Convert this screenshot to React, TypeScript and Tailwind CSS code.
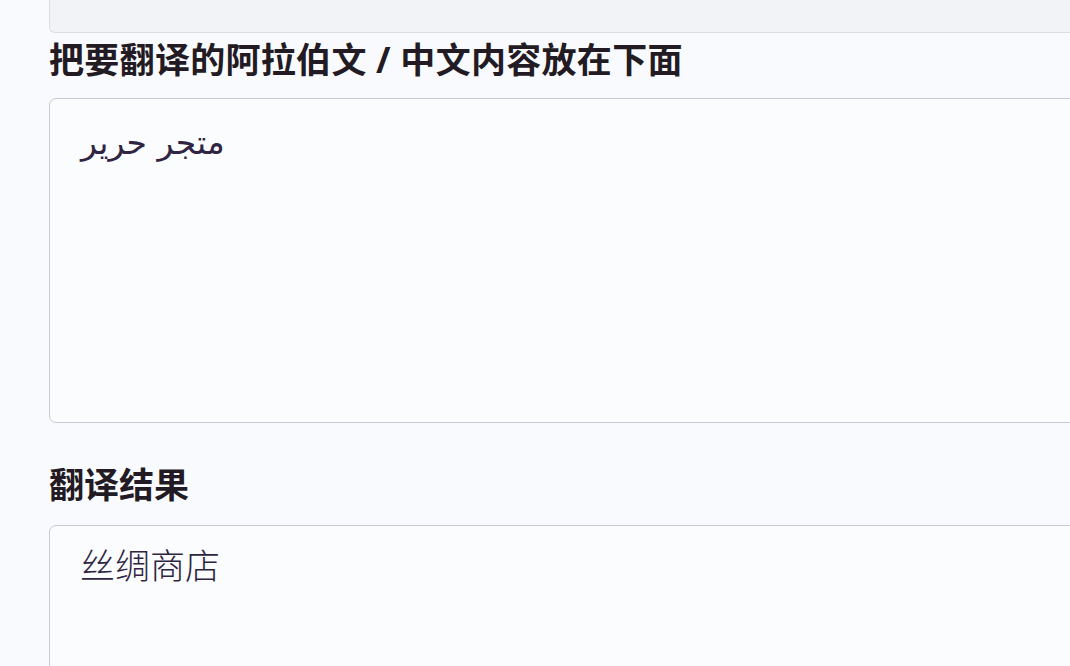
export default function App() {
    return (
        <div className="h-[666px] w-full overflow-hidden bg-[#f9fafd] pl-[49px] font-['Noto_Sans','Noto_Sans_CJK_SC',sans-serif]">
            <div className="w-[1060px]">
                {/* Previous field (cut off at the top) */}
                <div className="h-[33px] rounded-b-[6px] border-b border-l border-[#dcdee4] bg-[#f2f3f6]" />

                <label className="mt-[4px] block text-[35px] font-bold leading-[45px] tracking-[0.3px] text-[#231b24]">
                    把要翻译的阿拉伯文 / 中文内容放在下面
                </label>
                <textarea
                    readOnly
                    defaultValue="متجر حرير"
                    className="mt-[16px] block h-[325px] w-full resize-none rounded-[7px] border border-[#c8cad6] bg-[#fbfcfe] px-[31px] pt-[22px] text-[33px] leading-[44px] text-[#2f2542] outline-none font-['DejaVu_Sans',sans-serif]"
                />

                <label className="mt-[39px] block text-[35px] font-bold leading-[45px] text-[#231b24]">
                    翻译结果
                </label>
                <textarea
                    readOnly
                    defaultValue="丝绸商店"
                    className="mt-[18px] block h-[200px] w-full resize-none rounded-[7px] border border-[#c8cad6] bg-[#fbfcfe] px-[30px] pt-[18px] text-[35px] font-light leading-[44px] text-[#2f2542] outline-none"
                />
            </div>
        </div>
    );
}
